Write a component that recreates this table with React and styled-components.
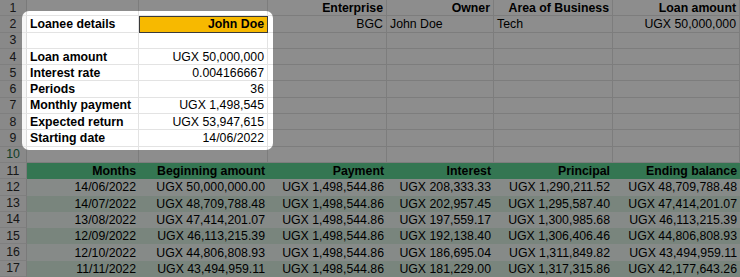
import React from "react";
import styled, { createGlobalStyle, css } from "styled-components";

const Global = createGlobalStyle`
  html, body { margin: 0; padding: 0; background: #ffffff; }
  body { font-family: "Liberation Sans", Arial, Helvetica, sans-serif; }
`;

const COLS = [27, 112, 129, 119, 107, 119, 127];

const Page = styled.div`
  position: relative;
  width: 740px;
  height: 277px;
  overflow: hidden;
  background: #ffffff;
`;

const Sheet = styled.div`
  display: grid;
  grid-template-columns: ${COLS.map((c) => c + "px").join(" ")};
  grid-template-rows: repeat(17, 1fr);
  width: 740px;
  height: 277px;
  font-size: 12.3px;
  color: #000;
`;

const RowHead = styled.div`
  display: flex;
  align-items: center;
  justify-content: center;
  background: #f7f7f7;
  border-right: 1px solid #dcdcdc;
  border-bottom: 1px solid #e6e6e6;
  color: ${(p) => (p.$active ? "#1d7145" : "#2a2a2a")};
  font-size: 12.3px;
  box-sizing: border-box;
`;

const Cell = styled.div`
  display: flex;
  align-items: center;
  justify-content: ${(p) => (p.$align === "right" ? "flex-end" : "flex-start")};
  padding: 0 3px;
  box-sizing: border-box;
  white-space: nowrap;
  overflow: visible;
  font-weight: ${(p) => (p.$bold ? 700 : 400)};
  background: #ffffff;
  border-right: 1px solid #e3e3e3;
  border-bottom: 1px solid #e3e3e3;
  ${(p) =>
    p.$variant === "highlight" &&
    css`
      background: #f7b900;
      border: 1px solid #3a3a3a;
    `}
  ${(p) =>
    p.$variant === "tableHead" &&
    css`
      background: #5ed594;
      border: none;
    `}
  ${(p) =>
    p.$variant === "band1" &&
    css`
      background: #f3faf6;
      border: none;
    `}
  ${(p) =>
    p.$variant === "band2" &&
    css`
      background: #dbf1e3;
      border: none;
    `}
`;

const Spotlight = styled.div`
  position: absolute;
  left: 22px;
  top: 11px;
  width: 251px;
  height: 139px;
  border-radius: 7px;
  box-shadow: 0 0 0 2000px rgba(0, 0, 0, 0.447);
  pointer-events: none;
`;

const L = (t, o = {}) => ({ t, align: "left", ...o });
const R = (t, o = {}) => ({ t, align: "right", ...o });
const E = { t: "" };

const top = [
  [E, E, R("Enterprise", { bold: true }), R("Owner", { bold: true }), R("Area of Business", { bold: true }), R("Loan amount", { bold: true })],
  [L("Loanee details", { bold: true }), R("John Doe", { bold: true, variant: "highlight" }), R("BGC"), L("John Doe"), L("Tech"), R("UGX 50,000,000")],
  [E, E, E, E, E, E],
  [L("Loan amount", { bold: true }), R("UGX 50,000,000"), E, E, E, E],
  [L("Interest rate", { bold: true }), R("0.004166667"), E, E, E, E],
  [L("Periods", { bold: true }), R("36"), E, E, E, E],
  [L("Monthly payment", { bold: true }), R("UGX 1,498,545"), E, E, E, E],
  [L("Expected return", { bold: true }), R("UGX 53,947,615"), E, E, E, E],
  [L("Starting date", { bold: true }), R("14/06/2022"), E, E, E, E],
  [E, E, E, E, E, E],
];

const header = ["Months", "Beginning amount", "Payment", "Interest", "Principal", "Ending balance"];

const data = [
  ["14/06/2022", "UGX 50,000,000.00", "UGX 1,498,544.86", "UGX 208,333.33", "UGX 1,290,211.52", "UGX 48,709,788.48"],
  ["14/07/2022", "UGX 48,709,788.48", "UGX 1,498,544.86", "UGX 202,957.45", "UGX 1,295,587.40", "UGX 47,414,201.07"],
  ["13/08/2022", "UGX 47,414,201.07", "UGX 1,498,544.86", "UGX 197,559.17", "UGX 1,300,985.68", "UGX 46,113,215.39"],
  ["12/09/2022", "UGX 46,113,215.39", "UGX 1,498,544.86", "UGX 192,138.40", "UGX 1,306,406.46", "UGX 44,806,808.93"],
  ["12/10/2022", "UGX 44,806,808.93", "UGX 1,498,544.86", "UGX 186,695.04", "UGX 1,311,849.82", "UGX 43,494,959.11"],
  ["11/11/2022", "UGX 43,494,959.11", "UGX 1,498,544.86", "UGX 181,229.00", "UGX 1,317,315.86", "UGX 42,177,643.26"],
];

export default function App() {
  const rows = [
    ...top,
    header.map((h) => R(h, { bold: true, variant: "tableHead" })),
    ...data.map((r, i) => r.map((v) => R(v, { variant: i % 2 === 0 ? "band1" : "band2" }))),
  ];
  return (
    <>
      <Global />
      <Page>
        <Sheet>
          {rows.map((row, ri) => (
            <React.Fragment key={ri}>
              <RowHead $active={ri === 9}>{ri + 1}</RowHead>
              {row.map((c, ci) => (
                <Cell key={ci} $align={c.align} $bold={c.bold} $variant={c.variant}>
                  {c.t}
                </Cell>
              ))}
            </React.Fragment>
          ))}
        </Sheet>
        <Spotlight />
      </Page>
    </>
  );
}
